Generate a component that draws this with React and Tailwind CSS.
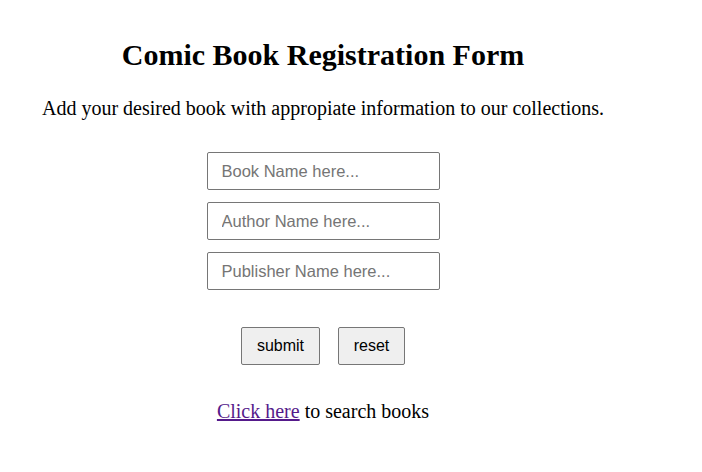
export default function App() {
  return (
    <div className="min-h-[472px] bg-white font-['Liberation_Serif',serif] text-black">
      <div className="w-[646px] text-center pt-[38px]">
        <h1 className="text-[30px] font-bold leading-[34px]">Comic Book Registration Form</h1>
        <p className="mt-[24px] text-[20px] leading-[24px]">
          Add your desired book with appropiate information to our collections.
        </p>

        <form className="mt-[32px] flex flex-col items-center gap-[12px] font-['Liberation_Sans',sans-serif]">
          <input
            type="text"
            placeholder="Book Name here..."
            className="w-[233px] h-[38px] px-[14px] text-[16.5px] border border-[#767676] rounded-[2px] placeholder:text-[#757575]"
          />
          <input
            type="text"
            placeholder="Author Name here..."
            className="w-[233px] h-[38px] px-[14px] text-[16.5px] border border-[#767676] rounded-[2px] placeholder:text-[#757575]"
          />
          <input
            type="text"
            placeholder="Publisher Name here..."
            className="w-[233px] h-[38px] px-[14px] text-[16.5px] border border-[#767676] rounded-[2px] placeholder:text-[#757575]"
          />
          <div className="mt-[25px] flex gap-[18px]">
            <button type="button" className="w-[79px] h-[38px] text-[16px] bg-[#efefef] border border-[#767676] rounded-[2px]">
              submit
            </button>
            <button type="button" className="w-[67px] h-[38px] text-[16px] bg-[#efefef] border border-[#767676] rounded-[2px]">
              reset
            </button>
          </div>
        </form>

        <p className="mt-[34px] text-[20px] leading-[24px]">
          <a href="#" className="underline text-[#551a8b]">Click here</a> to search books
        </p>
      </div>
    </div>
  );
}
